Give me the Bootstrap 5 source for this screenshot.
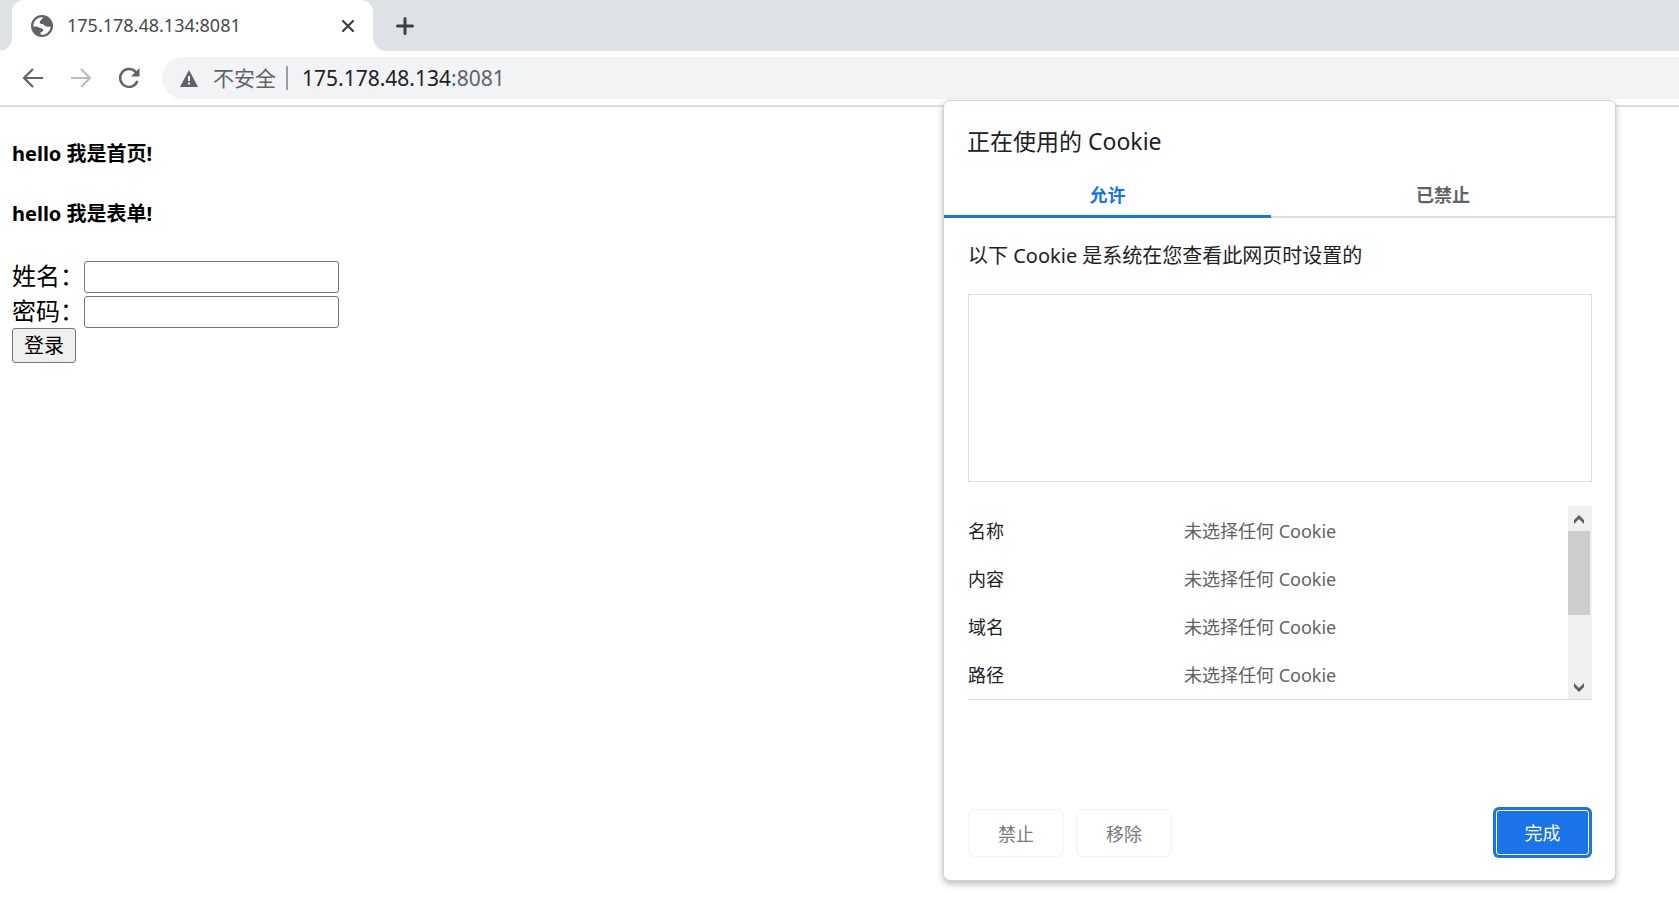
<!DOCTYPE html>
<html lang="zh-CN">
<head>
<meta charset="utf-8">
<meta name="viewport" content="width=device-width, initial-scale=1">
<title>175.178.48.134:8081</title>
<link rel="stylesheet" href="https://cdn.jsdelivr.net/npm/bootstrap@5.3.0/dist/css/bootstrap.min.css">
<style>
  body { font-family: "Noto Sans", "Noto Sans CJK SC", sans-serif; color: #000; background: #fff; overflow-x: hidden; }
  svg { display: block; flex: none; }
  .plain-btn { border: 0; background: none; padding: 0; color: #5f6368; }

  /* Tab strip */
  .tab-strip { background: #dee1e6; height: 51px; padding-left: 12px; }
  .page-tab { position: relative; width: 361px; padding: 0 19px; background: #fff; border-radius: 12px 12px 0 0; font-size: 18px; color: #45494d; gap: 14px; }
  .page-tab::before, .page-tab::after { content: ""; position: absolute; bottom: 0; width: 12px; height: 12px; }
  .page-tab::before { right: 100%; background: radial-gradient(circle at 0 0, transparent 11px, #fff 12px); }
  .page-tab::after { left: 100%; background: radial-gradient(circle at 100% 0, transparent 11px, #fff 12px); }
  .new-tab { margin-left: 23px; }

  /* Toolbar */
  .toolbar { height: 56px; padding: 6px 0 6px 21px; border-bottom: 2px solid #dadce0; }
  .tool-set { gap: 24px; width: 141px; }
  .omnibox { background: #f1f3f4; border-radius: 21px 0 0 21px; height: 42px; padding-left: 18px; font-size: 21px; line-height: 42px; color: #5f6368; }
  .omnibox-note { margin-left: 15px; }
  .omnibox-rule { width: 2px; height: 24px; background: #9aa0a6; margin: 0 14px 0 10px; }
  .omnibox b { color: #202124; font-weight: 400; }

  /* Page */
  .page-body { padding: 32px 12px; }
  .page-body h5 { font-size: 20px; line-height: 30px; font-weight: 700; margin: 0 0 30px; }
  .page-body form { padding-top: 2px; }
  .form-line { height: 35px; font-size: 24px; line-height: 30px; }
  .form-line input { width: 255px; height: 32px; border: 1px solid #767676; border-radius: 3px; padding: 2px 4px; font-size: 20px; }
  .login-btn { width: 64px; height: 35px; margin-top: -3px; padding: 0; border: 1px solid #767676; border-radius: 3px; background: #efefef; color: #000; font-size: 20px; line-height: 32px; }

  /* Cookie dialog */
  .cookie-dialog { position: absolute; top: 100px; right: 63px; width: 673px; height: 781px; background: #fff; border: 1px solid #d0d2d4; border-radius: 7px; box-shadow: 0 3px 6px rgba(60,64,67,.35); color: #202124; }
  .cookie-dialog h1 { font-size: 23px; line-height: 32px; font-weight: 400; margin: 0; padding: 24px 24px 18px 23px; }
  .cookie-tabs { height: 43px; border-bottom: 2px solid #dadce0; }
  .cookie-tabs button { font-size: 18px; line-height: 38px; font-weight: 700; flex: 1 1 0; height: 43px; border-bottom: 3px solid transparent; }
  .cookie-tabs .is-current { flex: 0 0 327px; color: #1a73e8; border-bottom-color: #1a73e8; }
  .cookie-content { padding: 22px 23px 23px 24px; }
  .cookie-note { font-size: 20px; line-height: 32px; margin: 0 0 22px; }
  .cookie-tree { height: 188px; border: 1px solid #dadce0; margin-bottom: 24px; }
  .cookie-info { height: 194px; border-bottom: 1px solid #dadce0; overflow: hidden; }
  .cookie-info table { font-size: 18px; line-height: 48px; margin-top: 1px; }
  .cookie-info th { width: 216px; font-weight: 400; padding: 0; }
  .cookie-info td { color: #5f6368; padding: 0; }
  .scroll-rail { width: 24px; background: #f0f0f0; padding-right: 2px; }
  .scroll-thumb { height: 84px; background: #cdcdcd; }
  .scroll-end { height: 25px; padding-top: 2px; }
  .action-row { gap: 12px; }
  .action-btn { width: 96px; height: 48px; border: 1px solid #f1f3f4; border-radius: 6px; background: #fff; color: #77797c; font-size: 18px; padding: 2px 0 0; }
  .done-btn { color: #fff; background: #1a73e8; border-color: #fff; box-shadow: 0 0 0 3px #1a73e8; width: 93px; height: 45px; margin: 0 3px 2px 0; border-radius: 3px; }
</style>
</head>
<body>
<header>
  <div class="tab-strip d-flex">
    <div class="page-tab d-flex align-items-center">
      <svg width="22" height="22" viewBox="0 0 22 22"><circle cx="11" cy="11" r="11" fill="#5f6368"/><path d="M12.500 2.300C10.800 3 11.300 4.600 9.800 5.300C8.300 6 8.500 7.600 9.300 8.500C10.200 9.400 12 8.800 13 9.800C14 10.800 13.500 11.400 15 11.600L19.700 11.800A8.800 8.800 0 0 1 9.600 19.700V17.200C11.200 17 12.300 16.200 12.200 14.800C12.100 13.600 11 13.200 9.800 13.200C8.300 13.100 8 11.900 6.500 11.700L2.300 11.400A8.800 8.800 0 0 1 12.500 2.300Z" fill="#fff"/></svg>
      <span class="flex-grow-1">175.178.48.134:8081</span>
      <button class="plain-btn" type="button" aria-label="关闭"><svg width="12" height="12" viewBox="0 0 12 12" fill="none" stroke="#3c4043" stroke-width="2.200" stroke-linecap="round"><path d="M1 1 11 11M11 1 1 11"/></svg></button>
    </div>
    <button class="plain-btn new-tab" type="button" aria-label="新标签页"><svg width="18" height="18" viewBox="0 0 18 18" fill="none" stroke="#3c4043" stroke-width="3" stroke-linecap="round"><path d="M9 1.500V16.500M1.500 9H16.500"/></svg></button>
  </div>
  <div class="toolbar d-flex align-items-center">
    <div class="tool-set d-flex flex-shrink-0">
      <button class="plain-btn" type="button" aria-label="返回"><svg width="24" height="24" viewBox="0 0 24 24" fill="none" stroke="#5f6368" stroke-width="2.200"><path d="M22 12H3.500M12 3 3 12 12 21"/></svg></button>
      <button class="plain-btn" type="button" aria-label="前进"><svg width="24" height="24" viewBox="0 0 24 24" fill="none" stroke="#babcbe" stroke-width="2.200"><path d="M2 12H20.500M12 3 21 12 12 21"/></svg></button>
      <button class="plain-btn" type="button" aria-label="重新加载"><svg width="24" height="24" viewBox="0 0 24 24" fill="none" stroke="#5f6368" stroke-width="2.400"><path d="M20.400 15A8.900 8.900 0 1 1 18.500 5.800L20 7.300"/><path d="M22.500 2V10.500H14Z" fill="#5f6368" stroke="none"/></svg></button>
    </div>
    <div class="omnibox d-flex align-items-center flex-grow-1">
      <svg width="18" height="17" viewBox="0 0 18 17"><path d="M9 0 18 17H0Z" fill="#5f6368"/><path d="M9 6V11M9 12.500V14.500" stroke="#f1f3f4" stroke-width="2"/></svg>
      <span class="omnibox-note">不安全</span>
      <span class="omnibox-rule"></span>
      <span><b>175.178.48.134</b>:8081</span>
    </div>
  </div>
</header>

<main class="page-body">
  <h5>hello 我是首页!</h5>
  <h5>hello 我是表单!</h5>
  <form>
    <div class="form-line d-flex"><label for="user">姓名：</label><input id="user" type="text"></div>
    <div class="form-line d-flex"><label for="pass">密码：</label><input id="pass" type="password"></div>
    <button class="login-btn d-block" type="button">登录</button>
  </form>
</main>

<section class="cookie-dialog d-flex flex-column" role="dialog" aria-labelledby="cookie-title">
  <h1 id="cookie-title">正在使用的 Cookie</h1>
  <div class="cookie-tabs d-flex" role="tablist">
    <button class="plain-btn is-current" type="button" role="tab" aria-selected="true">允许</button>
    <button class="plain-btn" type="button" role="tab" aria-selected="false">已禁止</button>
  </div>
  <div class="cookie-content d-flex flex-column flex-grow-1">
    <p class="cookie-note">以下 Cookie 是系统在您查看此网页时设置的</p>
    <div class="cookie-tree"></div>
    <div class="cookie-info d-flex">
      <div class="flex-grow-1">
        <table class="w-100">
          <tr><th scope="row">名称</th><td>未选择任何 Cookie</td></tr>
          <tr><th scope="row">内容</th><td>未选择任何 Cookie</td></tr>
          <tr><th scope="row">域名</th><td>未选择任何 Cookie</td></tr>
          <tr><th scope="row">路径</th><td>未选择任何 Cookie</td></tr>
        </table>
      </div>
      <div class="scroll-rail d-flex flex-column">
        <div class="scroll-end d-flex align-items-center justify-content-center"><svg width="10" height="9" viewBox="0 0 10 9"><path d="M5 0 10 5V9L5 4 0 9V5Z" fill="#606060"/></svg></div>
        <div class="scroll-thumb"></div>
        <div class="scroll-end d-flex align-items-center justify-content-center mt-auto"><svg width="10" height="9" viewBox="0 0 10 9"><path d="M5 9 0 4V0L5 5 10 0V4Z" fill="#606060"/></svg></div>
      </div>
    </div>
    <div class="action-row d-flex align-items-center mt-auto">
      <button class="action-btn" type="button">禁止</button>
      <button class="action-btn me-auto" type="button">移除</button>
      <button class="action-btn done-btn" type="button">完成</button>
    </div>
  </div>
</section>
<script src="https://cdn.jsdelivr.net/npm/bootstrap@5.3.0/dist/js/bootstrap.bundle.min.js"></script>
</body>
</html>
